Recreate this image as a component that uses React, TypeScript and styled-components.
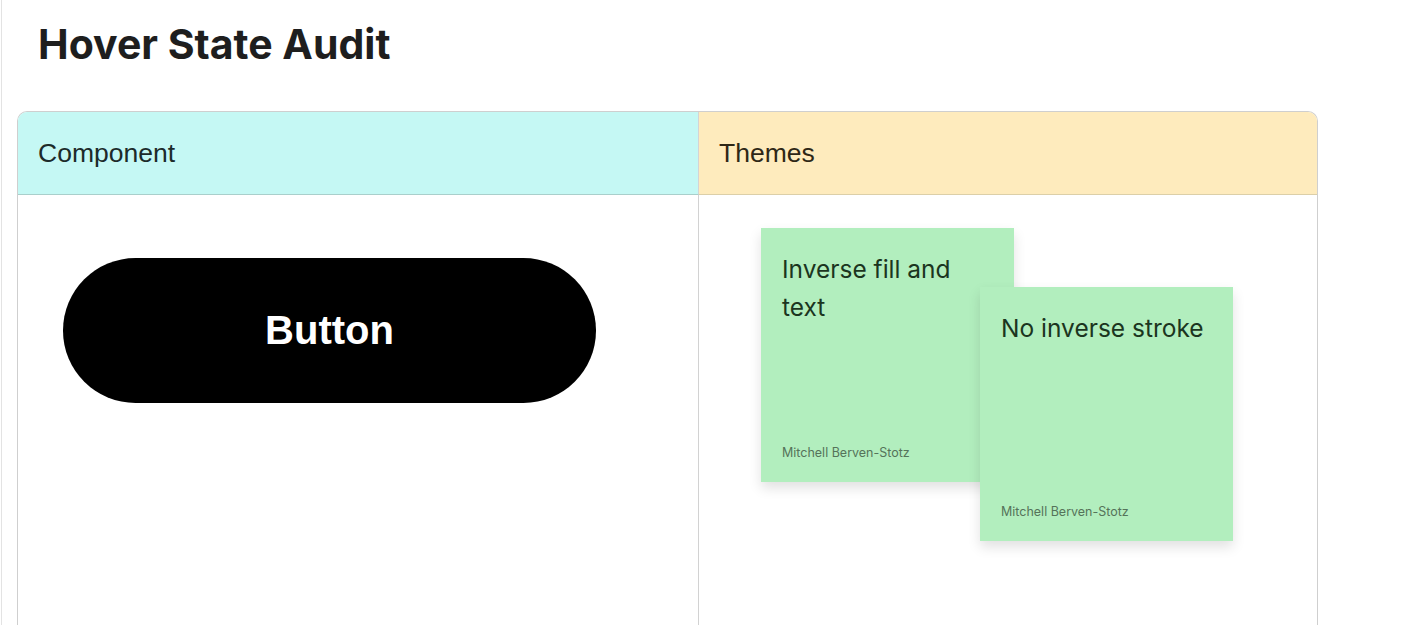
import React from 'react';
import styled, { createGlobalStyle } from 'styled-components';

const GlobalStyle = createGlobalStyle`
  html, body {
    margin: 0;
    padding: 0;
    background: #ffffff;
  }
  body {
    font-family: Inter, "Noto Sans", sans-serif;
    overflow: hidden;
  }
`;

const notes = [
  { id: 1, text: 'Inverse fill and text', author: 'Mitchell Berven-Stotz', x: 62, y: 33 },
  { id: 2, text: 'No inverse stroke', author: 'Mitchell Berven-Stotz', x: 281, y: 92 },
];

export default function App() {
  return (
    <>
      <GlobalStyle />
      <Frame>
        <Title>Hover State Audit</Title>
        <Table>
          <HeadCell tone="cyan">Component</HeadCell>
          <HeadCell tone="yellow" last>Themes</HeadCell>
          <BodyCell>
            <PillButton>Button</PillButton>
          </BodyCell>
          <BodyCell last>
            <Canvas>
              {notes.map((n) => (
                <Sticky key={n.id} style={{ left: n.x, top: n.y }}>
                  <NoteText>{n.text}</NoteText>
                  <Author>{n.author}</Author>
                </Sticky>
              ))}
            </Canvas>
          </BodyCell>
        </Table>
      </Frame>
    </>
  );
}

// --- Styled Components ---

const Frame = styled.div`
  margin-left: 1px;
  border-left: 1px solid #e3e3e3;
  height: 625px;
  padding: 0 0 0 15px;
  box-sizing: border-box;
  width: 1318px;
`;

const Title = styled.h1`
  margin: 0;
  padding: 19px 0 0 21px;
  height: 111px;
  box-sizing: border-box;
  font-family: Inter, sans-serif;
  font-size: 41px;
  font-weight: 700;
  color: #1e1e1e;
  line-height: 50px;
`;

const Table = styled.div`
  display: grid;
  grid-template-columns: 681px 620px;
  grid-template-rows: 83px 600px;
  border: 1px solid #cfcfcf;
  border-bottom: none;
  border-radius: 10px 10px 0 0;
  overflow: hidden;
  width: 1301px;
  box-sizing: border-box;
`;

const HeadCell = styled.div<{ tone: 'cyan' | 'yellow'; last?: boolean }>`
  display: flex;
  align-items: center;
  padding-left: 20px;
  background: ${(p) => (p.tone === 'cyan' ? '#c5f8f4' : '#feebbd')};
  border-bottom: 1px solid ${(p) => (p.tone === 'cyan' ? '#a9cfcb' : '#dccfa8')};
  border-right: ${(p) => (p.last ? 'none' : '1px solid #d4d4d4')};
  font-family: "Liberation Sans", Arial, sans-serif;
  font-size: 26.5px;
  color: ${(p) => (p.tone === 'cyan' ? '#1c2b2a' : '#2e2716')};
`;

const BodyCell = styled.div<{ last?: boolean }>`
  position: relative;
  border-right: ${(p) => (p.last ? 'none' : '1px solid #d2d2d2')};
  padding: ${(p) => (p.last ? '0' : '63px 0 0 45px')};
`;

const PillButton = styled.button`
  width: 533px;
  height: 145px;
  border: none;
  border-radius: 73px;
  background: #000000;
  color: #ffffff;
  font-family: "Liberation Sans", Arial, sans-serif;
  font-size: 40px;
  font-weight: 700;
  cursor: pointer;
`;

const Canvas = styled.div`
  position: relative;
  width: 100%;
  height: 100%;
`;

const Sticky = styled.div`
  position: absolute;
  width: 253px;
  height: 254px;
  box-sizing: border-box;
  padding: 22px 21px 22px 21px;
  background: #b2eebe;
  box-shadow: 0 6px 12px rgba(0, 0, 0, 0.12);
  display: flex;
  flex-direction: column;
  justify-content: space-between;
`;

const NoteText = styled.div`
  font-family: Inter, sans-serif;
  font-size: 24.5px;
  line-height: 38px;
  color: #1b3520;
`;

const Author = styled.div`
  font-family: Inter, sans-serif;
  font-size: 12.5px;
  color: #55735a;
`;
